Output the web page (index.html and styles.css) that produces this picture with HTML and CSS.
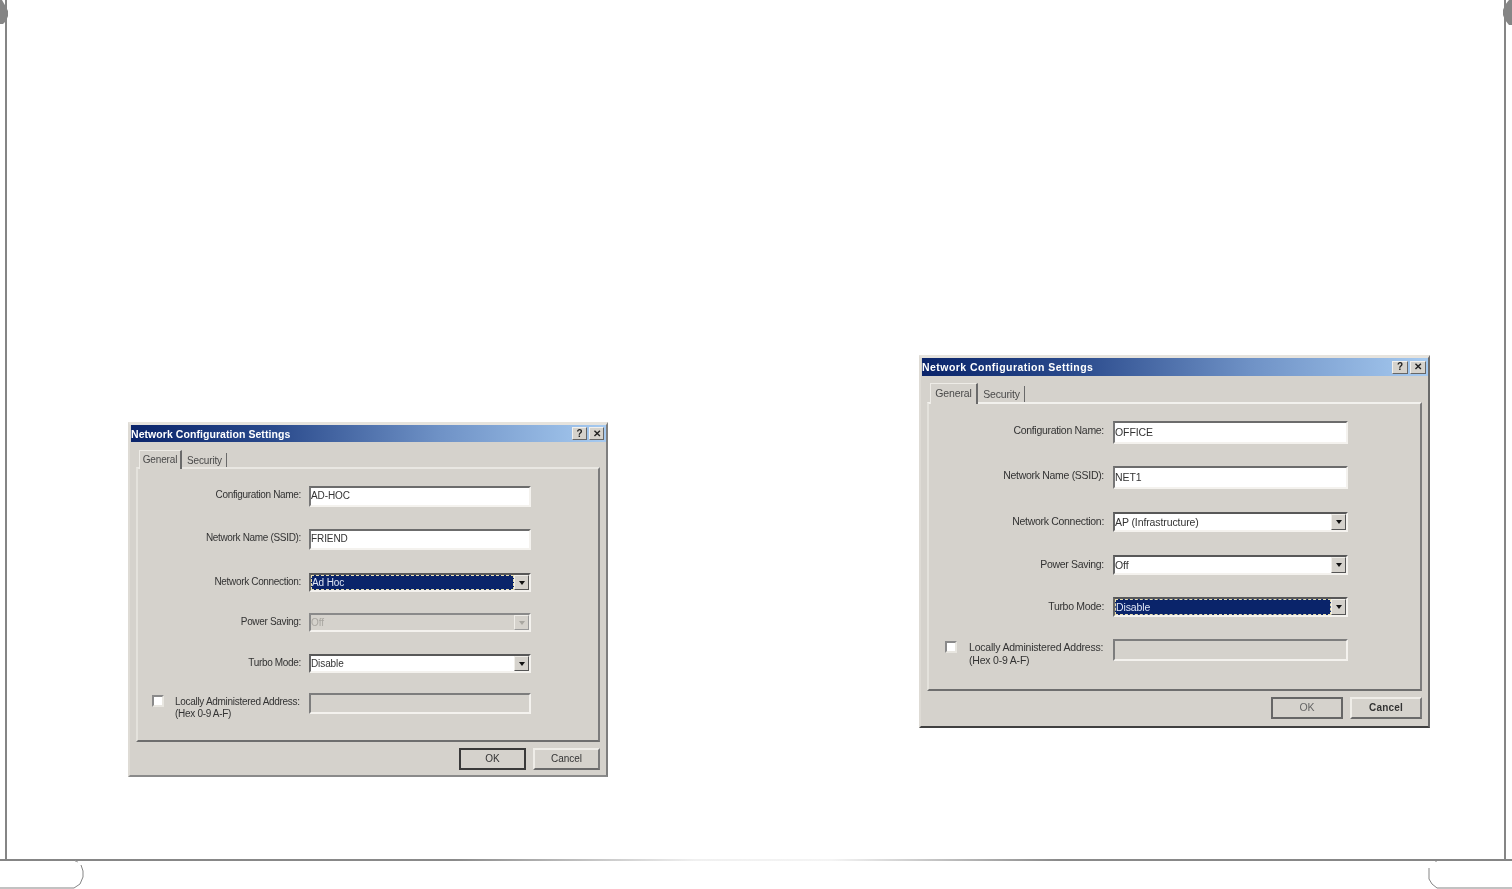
FILE: index.html
```html
<!DOCTYPE html>
<html lang="en">
<head>
<meta charset="utf-8">
<title>Network Configuration Settings</title>
<link rel="stylesheet" href="styles.css">
</head>
<body>
<div class="page">
  <svg class="frame" width="1512" height="889" viewBox="0 0 1512 889" aria-hidden="true">
    <defs>
      <linearGradient id="rule" x1="0" x2="1" y1="0" y2="0">
        <stop offset="0" stop-color="#858585"/>
        <stop offset="0.3" stop-color="#8a8a8a"/>
        <stop offset="0.46" stop-color="#f0f0f0"/>
        <stop offset="0.55" stop-color="#f4f4f4"/>
        <stop offset="0.7" stop-color="#8a8a8a"/>
        <stop offset="1" stop-color="#858585"/>
      </linearGradient>
    </defs>
    <rect x="0" y="859" width="1512" height="2" fill="url(#rule)"/>
    <rect x="5" y="0" width="2" height="860" fill="#858585"/>
    <rect x="1504" y="0" width="2" height="860" fill="#858585"/>
    <path d="M0 0H2L6 7L8 11V16L6 21L3 24H0Z" fill="#858585"/>
    <path d="M1509 0H1512V25H1509L1505 20L1503 15V10L1505 5Z" fill="#858585"/>
    <path d="M0 888H74L80 884L83 877V871L81 865" fill="none" stroke="#858585"/>
    <path d="M78 862L75 861" fill="none" stroke="#a8a8a8"/>
    <path d="M1512 888H1437L1432 884L1429 879V868" fill="none" stroke="#858585"/>
    <path d="M1436 861V862" fill="none" stroke="#858585"/>
  </svg>

  <section class="dialog dialog-left">
    <header class="titlebar">
      <span class="title">Network Configuration Settings</span>
      <span class="caption-btns"><span class="cap-btn">?</span><span class="cap-btn">✕</span></span>
    </header>
    <nav class="tabs">
      <span class="tab tab-active">General</span>
      <span class="tab">Security</span>
    </nav>
    <div class="panel">
      <div class="form">
        <label class="label">Configuration Name:</label>
        <div class="field tall"><span class="value">AD-HOC</span></div>
        <label class="label">Network Name (SSID):</label>
        <div class="field tall"><span class="value">FRIEND</span></div>
        <label class="label">Network Connection:</label>
        <div class="field select"><span class="value selected">Ad Hoc</span><span class="drop"><i class="arrow"></i></span></div>
        <label class="label">Power Saving:</label>
        <div class="field select disabled"><span class="value">Off</span><span class="drop"><i class="arrow"></i></span></div>
        <label class="label">Turbo Mode:</label>
        <div class="field select"><span class="value">Disable</span><span class="drop"><i class="arrow"></i></span></div>
        <div class="check-label"><span class="checkbox"></span><span class="check-text">Locally Administered Address:<br>(Hex 0-9 A-F)</span></div>
        <div class="field tall disabled"></div>
      </div>
    </div>
    <footer class="actions">
      <span class="btn btn-default">OK</span>
      <span class="btn">Cancel</span>
    </footer>
  </section>

  <section class="dialog dialog-right">
    <header class="titlebar">
      <span class="title">Network Configuration Settings</span>
      <span class="caption-btns"><span class="cap-btn">?</span><span class="cap-btn">✕</span></span>
    </header>
    <nav class="tabs">
      <span class="tab tab-active">General</span>
      <span class="tab">Security</span>
    </nav>
    <div class="panel">
      <div class="form">
        <label class="label">Configuration Name:</label>
        <div class="field tall"><span class="value">OFFICE</span></div>
        <label class="label">Network Name (SSID):</label>
        <div class="field tall"><span class="value">NET1</span></div>
        <label class="label">Network Connection:</label>
        <div class="field select"><span class="value">AP (Infrastructure)</span><span class="drop"><i class="arrow"></i></span></div>
        <label class="label">Power Saving:</label>
        <div class="field select"><span class="value">Off</span><span class="drop"><i class="arrow"></i></span></div>
        <label class="label">Turbo Mode:</label>
        <div class="field select"><span class="value selected">Disable</span><span class="drop"><i class="arrow"></i></span></div>
        <div class="check-label"><span class="checkbox"></span><span class="check-text">Locally Administered Address:<br>(Hex 0-9 A-F)</span></div>
        <div class="field tall disabled"></div>
      </div>
    </div>
    <footer class="actions">
      <span class="btn btn-default">OK</span>
      <span class="btn">Cancel</span>
    </footer>
  </section>
</div>
</body>
</html>
```
FILE: styles.css
```css
* { box-sizing: border-box; }
html, body { margin: 0; padding: 0; background: #fff; }
.page { position: relative; width: 1512px; height: 889px; overflow: hidden; background: #fff; font-family: "Liberation Sans", Arial, sans-serif; }
.frame { position: absolute; left: 0; top: 0; display: block; }

.dialog {
  --face: #d5d2cc;
  position: absolute;
  display: flex;
  flex-direction: column;
  background: var(--face);
  border-style: solid;
  border-width: 3px 2px 2px 2px;
  border-color: #e6e3dd #7f7f7f #8a8a8a #dedbd5;
  color: #222;
  filter: blur(0.55px);
  font-size: var(--font);
}
.dialog-left {
  --font: 10px; --label-ls: -0.33px; --title-font: 10.5px; --title-ls: 0.06px; --cap-w: 15px;
  --title-h: 17px; --tabs-top: 8px; --tab-h: 17px; --tab-w1: 43px; --tab-w2: 44px;
  left: 128px; top: 422px; width: 480px; height: 355px;
}
.dialog-right {
  --font: 10.5px; --label-ls: -0.3px; --title-font: 10.5px; --title-ls: 0.46px; --cap-w: 16px;
  --title-h: 18px; --tabs-top: 7px; --tab-h: 19px; --tab-w1: 48px; --tab-w2: 46px;
  left: 919px; top: 355px; width: 511px; height: 373px;
  border-bottom-color: #404040; border-right-color: #6a6a6a;
}

.titlebar {
  display: flex;
  align-items: center;
  justify-content: space-between;
  height: var(--title-h);
  flex: none;
  margin: 0 0 0 1px;
  padding: 0 2px 0 0;
  background: linear-gradient(90deg, #0a246a 0%, #2a4a8c 30%, #6f92c6 65%, #a6caf0 100%);
}
.title { color: #fff; font-weight: 700; font-size: var(--title-font); letter-spacing: var(--title-ls); white-space: nowrap; }
.caption-btns { display: flex; gap: 2px; }
.cap-btn {
  width: var(--cap-w); height: 13px;
  display: flex; align-items: center; justify-content: center;
  background: var(--face);
  border: 1px solid; border-color: #f2f0ec #666 #666 #f2f0ec;
  color: #222; font-size: 10px; font-weight: 700; line-height: 1;
}

.tabs {
  position: relative;
  z-index: 1;
  display: flex;
  align-items: flex-end;
  flex: none;
  height: var(--tab-h);
  margin: var(--tabs-top) 0 0 9px;
  gap: 1px;
}
.tab {
  display: flex; align-items: center; justify-content: center;
  width: var(--tab-w2); height: calc(var(--tab-h) - 3px);
  border-right: 1px solid #6a6a6a;
  color: #4a4a4a;
  letter-spacing: -0.15px;
}
.tab-active {
  width: var(--tab-w1); height: calc(var(--tab-h) + 2px);
  background: var(--face);
  border-top: 1px solid #eeece7; border-left: 1px solid #eeece7; border-right: 2px solid #6a6a6a;
  margin-bottom: -2px;
  padding-bottom: 2px;
}

.panel {
  flex: none;
  margin: 0 6px 0 6px;
  border: 2px solid; border-color: #e9e7e2 #7c7c7c #6e6e6e #e4e2dc;
}
.dialog-right .panel { border-color: #f2f1ed #7c7c7c #6e6e6e #e4e2dc; }
.dialog-left .panel { height: 275px; padding-top: 17px; }
.dialog-right .panel { height: 289px; padding-top: 17px; }

.form { display: grid; column-gap: 8px; align-items: start; }
.dialog-left .form { grid-template-columns: 163px 222px; grid-template-rows: 43px 44px 40px 41px 39px auto; }
.dialog-right .form { column-gap: 9px; grid-template-columns: 175px 235px; grid-template-rows: 45px 46px 43px 42px 42px auto; }

.label { text-align: right; white-space: nowrap; letter-spacing: var(--label-ls); line-height: 1; padding-top: 4px; color: #333; }

.field {
  display: flex; align-items: stretch;
  height: 19px;
  background: #fff;
  border: 2px solid; border-color: #6c6c6c #f4f2ee #f4f2ee #777;
  padding: 0;
}
.field.tall { height: 21px; }
.dialog-right .field.tall { height: 23px; }
.dialog-right .field { height: 20px; }
.field.disabled { background: var(--face); color: #a8a6a0; }
.field.select { border-color: #585858 #f4f2ee #f4f2ee #666; }
.field.select.disabled { border-color: #8a8a8a #f4f2ee #f4f2ee #8a8a8a; }
.dialog-right .field.tall.disabled { height: 22px; border-color: #7d7d7d #f4f2ee #f4f2ee #7d7d7d; }
.dialog-left .field.tall.disabled { border-color: #7d7d7d #f4f2ee #f4f2ee #7d7d7d; }

.value { flex: 1; display: flex; align-items: center; padding-left: 0; white-space: nowrap; letter-spacing: -0.1px; color: #333; }
.tall .value { padding-bottom: 2px; }
.disabled .value { color: #a8a6a0; }
.value.selected {
  background: #0a246a; color: #dfe6f5; padding-left: 1px;
  outline: 1px dashed #e8dfb0; outline-offset: -1px;
}
.drop {
  flex: none; width: 15px;
  display: flex; align-items: center; justify-content: center;
  background: var(--face);
  border: 1px solid; border-color: #f0eee9 #555 #555 #f0eee9;
}
.arrow { display: block; width: 0; height: 0; border: 3px solid transparent; border-top: 4px solid #111; border-bottom: 0; }
.disabled .arrow { border-top-color: #a8a6a0; }
.disabled .drop { border-color: #f0eee9 #9a9a9a #9a9a9a #f0eee9; }

.check-label { display: flex; align-items: flex-start; white-space: nowrap; }
.dialog-left .check-label { padding-left: 14px; gap: 11px; letter-spacing: -0.3px; }
.dialog-right .check-label { padding-left: 16px; gap: 12px; letter-spacing: -0.2px; }
.checkbox {
  flex: none; width: 12px; height: 12px; margin-top: 2px;
  background: #fff;
  border: 2px solid; border-color: #8a8a8a #e8e6e0 #e8e6e0 #8a8a8a;
}
.check-text { line-height: 12px; padding-top: 3px; color: #333; }
.dialog-right .check-text { line-height: 13px; padding-top: 2px; }

.actions { display: flex; justify-content: flex-end; flex: none; gap: 7px; margin: 6px 6px 0 0; }
.btn {
  display: flex; align-items: center; justify-content: center;
  height: 22px;
  padding-bottom: 2px;
  border: 2px solid; border-color: #efede8 #7a7a7a #6a6a6a #efede8;
  color: #333;
}
.dialog-left .btn { width: 67px; }
.dialog-right .btn { width: 72px; }
.btn-default { border-color: #3a3a3a; }
.dialog-right .btn-default { border-color: #666; color: #666; }
.dialog-right .btn:not(.btn-default) { font-weight: 700; letter-spacing: 0.2px; font-size: 10px; }
```
